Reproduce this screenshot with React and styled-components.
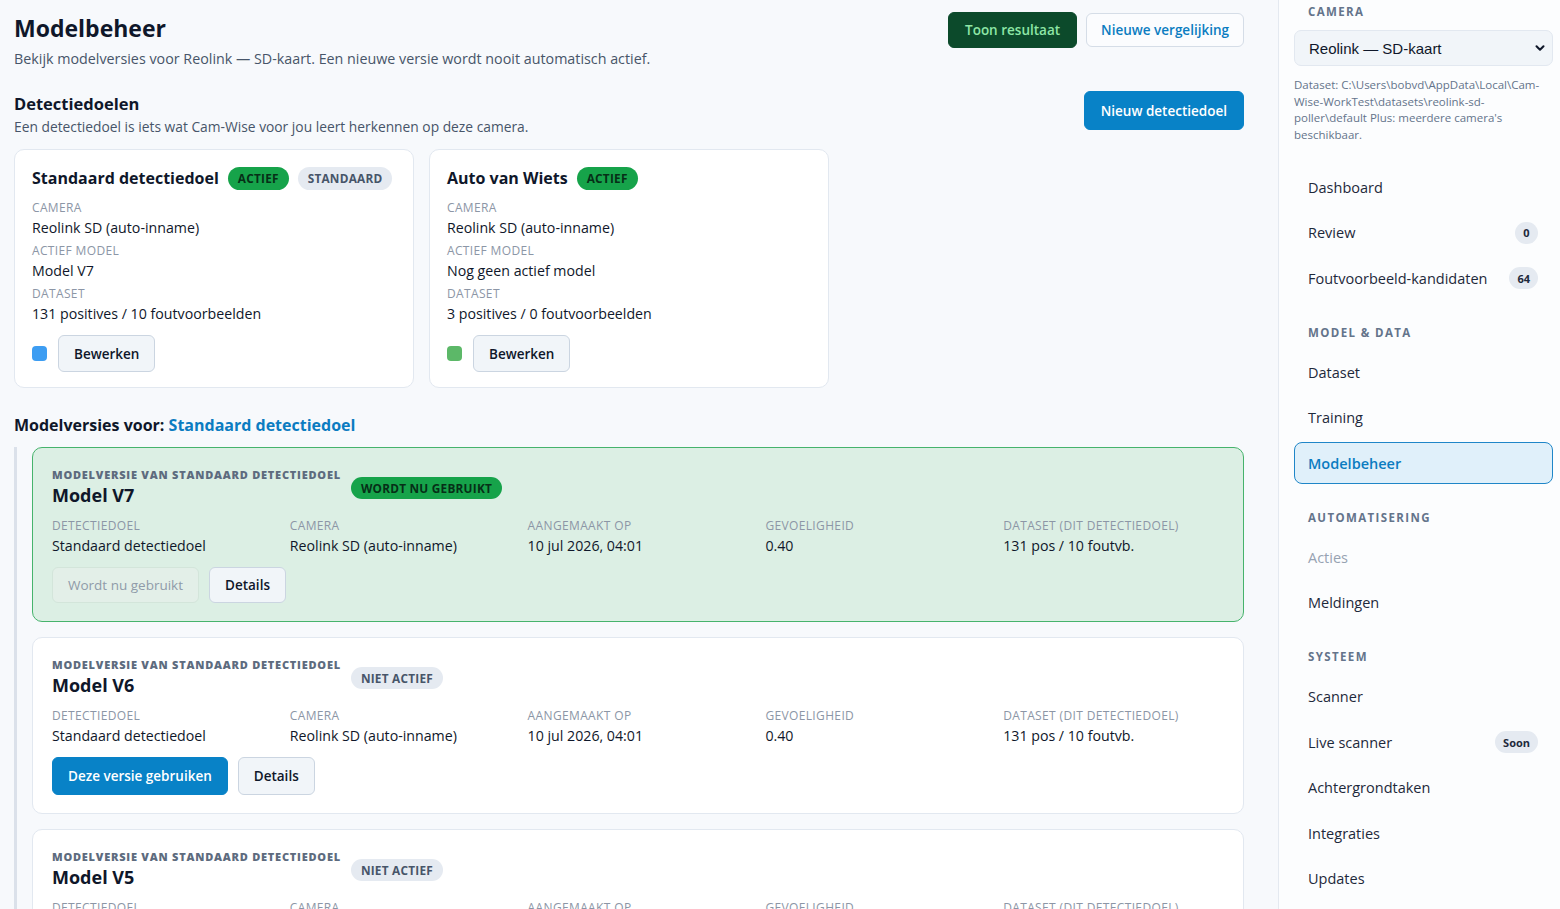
import React from "react";
import styled, { createGlobalStyle, css } from "styled-components";

const GlobalStyle = createGlobalStyle`
  * { box-sizing: border-box; }
  html, body { margin: 0; padding: 0; }
  body {
    background: #f7f9fc;
    font-family: "Open Sans", "Noto Sans", sans-serif;
    color: #0f172a;
    -webkit-font-smoothing: antialiased;
  }
`;

const Shell = styled.div`
  display: grid;
  grid-template-columns: 1fr 282px;
  height: 909px;
  overflow: hidden;
`;

const Main = styled.main`
  padding: 12px 34px 0 14px;
  overflow: hidden;
  min-width: 0;
`;

const HeaderRow = styled.div`
  display: flex;
  justify-content: space-between;
  align-items: flex-start;
  gap: 16px;
`;

const TitleBlock = styled.div`
  display: flex;
  flex-direction: column;
`;

const H1 = styled.h1`
  margin: 0;
  font-size: 23px;
  line-height: 32px;
  font-weight: 700;
  color: #0f172a;
`;

const Lead = styled.p`
  margin: 5px 0 0;
  font-size: 14.3px;
  line-height: 20px;
  color: #475569;
`;

const ButtonGroup = styled.div`
  display: flex;
  align-items: center;
  gap: 9px;
`;

const Button = styled.button`
  font-family: inherit;
  font-size: 13.5px;
  font-weight: 600;
  height: ${(p) => p.$h || 36}px;
  padding: 0 ${(p) => p.$px || 15}px;
  border-radius: 6px;
  border: 1px solid #cbd5e1;
  background: #f1f5f9;
  color: #0f172a;
  cursor: pointer;
  white-space: nowrap;
  flex: none;
  ${(p) =>
    p.$variant === "dark" &&
    css`
      background: #0c4a2b;
      border-color: #0c4a2b;
      color: #8ee6a6;
    `}
  ${(p) =>
    p.$variant === "outline" &&
    css`
      background: #fbfcfe;
      border-color: #d5dde7;
      color: #0b7cc1;
    `}
  ${(p) =>
    p.$variant === "primary" &&
    css`
      background: #0882c7;
      border-color: #0882c7;
      color: #ffffff;
    `}
  ${(p) =>
    p.$variant === "disabled" &&
    css`
      background: #e3efe8;
      border-color: #d3e5da;
      color: #8f9ba9;
      font-weight: 500;
      cursor: default;
    `}
`;

const SectionRow = styled.div`
  display: flex;
  justify-content: space-between;
  align-items: flex-start;
  margin-top: 22px;
`;

const SectionTitles = styled(TitleBlock)`
  padding-top: 1px;
`;

const H2 = styled.h2`
  margin: 0;
  font-size: 16.5px;
  line-height: 24px;
  font-weight: 700;
  color: #0f172a;
`;

const SubText = styled.p`
  margin: 1px 0 0;
  font-size: 13.8px;
  line-height: 20px;
  color: #475569;
`;

const GoalRow = styled.div`
  display: flex;
  gap: 15px;
  margin-top: 12px;
`;

const GoalCard = styled.div`
  width: 400px;
  flex: none;
  background: #ffffff;
  border: 1px solid #e2e8f0;
  border-radius: 10px;
  padding: 16px 14px 15px 17px;
`;

const CardTitleRow = styled.div`
  display: flex;
  align-items: center;
  gap: 9px;
  margin-bottom: 10px;
`;

const CardTitle = styled.div`
  font-size: 16px;
  line-height: 24px;
  font-weight: 700;
  color: #0f172a;
  white-space: nowrap;
  flex: none;
`;

const Badge = styled.span`
  display: inline-flex;
  align-items: center;
  flex: none;
  height: ${(p) => p.$h || 23}px;
  padding: 0 10px;
  border-radius: 999px;
  font-size: 11.8px;
  font-weight: 700;
  letter-spacing: 0.02em;
  text-transform: uppercase;
  white-space: nowrap;
  background: ${(p) => (p.$tone === "green" ? "#16a34a" : "#e5eaf1")};
  color: ${(p) => (p.$tone === "green" ? "#062f17" : "#475569")};
`;

const FieldList = styled.div`
  display: flex;
  flex-direction: column;
  gap: 5px;
`;

const Field = styled.div`
  display: flex;
  flex-direction: column;
  gap: 1px;
`;

const Label = styled.div`
  font-size: 12px;
  line-height: 16px;
  color: #8c96a6;
  text-transform: uppercase;
  letter-spacing: 0.03em;
  white-space: nowrap;
`;

const Value = styled.div`
  font-size: 14.2px;
  line-height: 21px;
  color: #0f172a;
  white-space: nowrap;
`;

const CardFooter = styled.div`
  display: flex;
  align-items: center;
  gap: 11px;
  margin-top: 11px;
`;

const Swatch = styled.span`
  width: 15px;
  height: 15px;
  border-radius: 4px;
  background: ${(p) => p.$color};
  flex: none;
`;

const VersionHeading = styled.h2`
  margin: 25px 0 0;
  font-size: 16px;
  line-height: 24px;
  font-weight: 700;
  color: #0f172a;
`;

const LinkText = styled.span`
  color: #0b7cc1;
`;

const VersionList = styled.div`
  margin-top: 10px;
  border-left: 3px solid #dbe1ea;
  padding-left: 15px;
  display: flex;
  flex-direction: column;
  gap: 15px;
`;

const VersionCard = styled.div`
  border-radius: 10px;
  padding: 19px 20px 18px 19px;
  border: 1px solid ${(p) => (p.$active ? "#46b36c" : "#e2e8f0")};
  background: ${(p) => (p.$active ? "#dcefe4" : "#ffffff")};
`;

const VersionHeader = styled.div`
  display: flex;
  align-items: center;
  gap: 10px;
`;

const VersionTitleBlock = styled.div`
  display: flex;
  flex-direction: column;
  gap: 1px;
`;

const Eyebrow = styled.div`
  font-size: 11px;
  line-height: 15px;
  font-weight: 800;
  letter-spacing: 0.07em;
  text-transform: uppercase;
  color: #5d6b7e;
`;

const VersionTitle = styled.div`
  font-size: 18px;
  line-height: 25px;
  font-weight: 700;
  color: #0f172a;
`;

const MetaGrid = styled.div`
  display: grid;
  grid-template-columns: repeat(5, 1fr);
  column-gap: 18px;
  margin-top: 10px;
`;

const VersionActions = styled.div`
  display: flex;
  gap: 10px;
  margin-top: 11px;
`;

/* Sidebar */
const Sidebar = styled.aside`
  border-left: 1px solid #e4e9f0;
  background: #fcfdfe;
  padding: 4px 7px 0 15px;
  overflow: hidden;
`;

const SideLabel = styled.div`
  font-size: 11.5px;
  line-height: 16px;
  font-weight: 700;
  letter-spacing: 0.12em;
  text-transform: uppercase;
  color: #64748b;
  padding: 0 14px;
`;

const SelectWrap = styled.div`
  position: relative;
  margin-top: 10px;
`;

const Select = styled.select`
  appearance: none;
  -webkit-appearance: none;
  width: 100%;
  height: 36px;
  border-radius: 7px;
  border: 1px solid #e2e8f0;
  background: #f1f5f9;
  font-family: "Liberation Sans", Arial, sans-serif;
  font-size: 15px;
  color: #0f172a;
  padding: 0 30px 0 14px;
`;

const Chevron = styled.svg`
  position: absolute;
  right: 6px;
  top: 50%;
  transform: translateY(-50%);
  pointer-events: none;
`;

const DatasetNote = styled.p`
  margin: 11px 0 0;
  font-size: 11.5px;
  line-height: 16.5px;
  color: #64748b;
`;

const Nav = styled.nav`
  display: flex;
  flex-direction: column;
  gap: 3.5px;
  margin-top: 23px;
`;

const NavItem = styled.a`
  display: flex;
  align-items: center;
  justify-content: space-between;
  height: 42px;
  flex: none;
  padding: 0 14px 0 13px;
  border-radius: 8px;
  border: 1px solid transparent;
  font-size: 14.5px;
  font-weight: 500;
  color: ${(p) => (p.$muted ? "#97a2b2" : "#1e293b")};
  text-decoration: none;
  ${(p) =>
    p.$active &&
    css`
      border-color: #1f86c8;
      background: #e0f0fa;
      color: #0b7cc1;
      font-weight: 600;
    `}
`;

const NavSection = styled.div`
  font-size: 11.5px;
  line-height: 16px;
  font-weight: 700;
  letter-spacing: 0.12em;
  text-transform: uppercase;
  color: #64748b;
  padding: 22px 14px 7px;
`;

const Count = styled.span`
  display: inline-flex;
  align-items: center;
  justify-content: center;
  min-width: 23px;
  height: 22px;
  padding: 0 8px;
  border-radius: 999px;
  background: #e5eaf1;
  color: #1e293b;
  font-size: 11px;
  font-weight: 700;
`;

const goals = [
  {
    name: "Standaard detectiedoel",
    standard: true,
    camera: "Reolink SD (auto-inname)",
    model: "Model V7",
    dataset: "131 positives / 10 foutvoorbeelden",
    color: "#3d9df2",
  },
  {
    name: "Auto van Wiets",
    standard: false,
    camera: "Reolink SD (auto-inname)",
    model: "Nog geen actief model",
    dataset: "3 positives / 0 foutvoorbeelden",
    color: "#5cb868",
  },
];

const versions = [
  { name: "Model V7", active: true },
  { name: "Model V6", active: false },
  { name: "Model V5", active: false },
];

const meta = [
  ["Detectiedoel", "Standaard detectiedoel"],
  ["Camera", "Reolink SD (auto-inname)"],
  ["Aangemaakt op", "10 jul 2026, 04:01"],
  ["Gevoeligheid", "0.40"],
  ["Dataset (dit detectiedoel)", "131 pos / 10 foutvb."],
];

const nav = [
  { type: "item", label: "Dashboard" },
  { type: "item", label: "Review", count: "0" },
  { type: "item", label: "Foutvoorbeeld-kandidaten", count: "64" },
  { type: "section", label: "Model & Data" },
  { type: "item", label: "Dataset" },
  { type: "item", label: "Training" },
  { type: "item", label: "Modelbeheer", active: true },
  { type: "section", label: "Automatisering" },
  { type: "item", label: "Acties", muted: true },
  { type: "item", label: "Meldingen" },
  { type: "section", label: "Systeem" },
  { type: "item", label: "Scanner" },
  { type: "item", label: "Live scanner", count: "Soon" },
  { type: "item", label: "Achtergrondtaken" },
  { type: "item", label: "Integraties" },
  { type: "item", label: "Updates" },
];

export default function App() {
  return (
    <>
      <GlobalStyle />
      <Shell>
        <Main>
          <HeaderRow>
            <TitleBlock>
              <H1>Modelbeheer</H1>
              <Lead>
                Bekijk modelversies voor Reolink — SD-kaart. Een nieuwe versie wordt nooit
                automatisch actief.
              </Lead>
            </TitleBlock>
            <ButtonGroup>
              <Button $variant="dark" $h={36} $px={16}>Toon resultaat</Button>
              <Button $variant="outline" $h={34} $px={14}>Nieuwe vergelijking</Button>
            </ButtonGroup>
          </HeaderRow>

          <SectionRow>
            <SectionTitles>
              <H2>Detectiedoelen</H2>
              <SubText>Een detectiedoel is iets wat Cam-Wise voor jou leert herkennen op deze camera.</SubText>
            </SectionTitles>
            <Button $variant="primary" $h={39} $px={16}>Nieuw detectiedoel</Button>
          </SectionRow>

          <GoalRow>
            {goals.map((g) => (
              <GoalCard key={g.name}>
                <CardTitleRow>
                  <CardTitle>{g.name}</CardTitle>
                  <Badge $tone="green">Actief</Badge>
                  {g.standard && <Badge>Standaard</Badge>}
                </CardTitleRow>
                <FieldList>
                  <Field>
                    <Label>Camera</Label>
                    <Value>{g.camera}</Value>
                  </Field>
                  <Field>
                    <Label>Actief model</Label>
                    <Value>{g.model}</Value>
                  </Field>
                  <Field>
                    <Label>Dataset</Label>
                    <Value>{g.dataset}</Value>
                  </Field>
                </FieldList>
                <CardFooter>
                  <Swatch $color={g.color} />
                  <Button $h={37}>Bewerken</Button>
                </CardFooter>
              </GoalCard>
            ))}
          </GoalRow>

          <VersionHeading>
            Modelversies voor: <LinkText>Standaard detectiedoel</LinkText>
          </VersionHeading>

          <VersionList>
            {versions.map((v) => (
              <VersionCard key={v.name} $active={v.active}>
                <VersionHeader>
                  <VersionTitleBlock>
                    <Eyebrow>Modelversie van Standaard detectiedoel</Eyebrow>
                    <VersionTitle>{v.name}</VersionTitle>
                  </VersionTitleBlock>
                  <Badge $tone={v.active ? "green" : "gray"} $h={22}>
                    {v.active ? "Wordt nu gebruikt" : "Niet actief"}
                  </Badge>
                </VersionHeader>
                <MetaGrid>
                  {meta.map(([l, val]) => (
                    <Field key={l}>
                      <Label>{l}</Label>
                      <Value>{val}</Value>
                    </Field>
                  ))}
                </MetaGrid>
                <VersionActions>
                  {v.active ? (
                    <Button $variant="disabled" $h={36} disabled>
                      Wordt nu gebruikt
                    </Button>
                  ) : (
                    <Button $variant="primary" $h={38}>Deze versie gebruiken</Button>
                  )}
                  <Button $h={v.active ? 36 : 38}>Details</Button>
                </VersionActions>
              </VersionCard>
            ))}
          </VersionList>
        </Main>

        <Sidebar>
          <SideLabel>Camera</SideLabel>
          <SelectWrap>
            <Select defaultValue="sd">
              <option value="sd">Reolink — SD-kaart</option>
            </Select>
            <Chevron width="14" height="14" viewBox="0 0 24 24" fill="none" stroke="#0f172a" strokeWidth="3.5" strokeLinecap="round" strokeLinejoin="round">
              <path d="M6 9l6 6 6-6" />
            </Chevron>
          </SelectWrap>
          <DatasetNote>
            Dataset: C:\Users\bobvd\AppData\Local\Cam-
            <br />
            Wise-WorkTest\datasets\reolink-sd-
            <br />
            poller\default Plus: meerdere camera's
            <br />
            beschikbaar.
          </DatasetNote>
          <Nav>
            {nav.map((n) =>
              n.type === "section" ? (
                <NavSection key={n.label}>{n.label}</NavSection>
              ) : (
                <NavItem key={n.label} href="#" $active={n.active} $muted={n.muted}>
                  <span>{n.label}</span>
                  {n.count && <Count>{n.count}</Count>}
                </NavItem>
              )
            )}
          </Nav>
        </Sidebar>
      </Shell>
    </>
  );
}
